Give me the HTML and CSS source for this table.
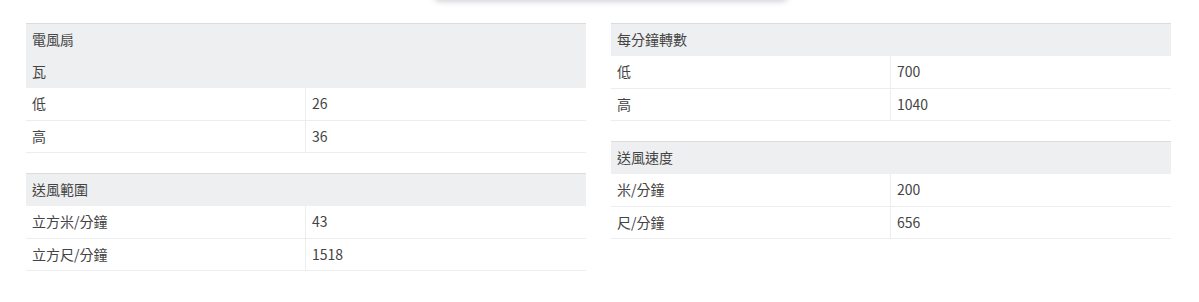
FILE: index.html
```html
<!DOCTYPE html>
<html lang="zh-Hant">
<head>
<meta charset="utf-8">
<link rel="stylesheet" href="styles.css">
</head>
<body>
<div class="popover"></div>
<div class="specs">
  <div class="col">
    <div class="spec">
      <div class="head">電風扇</div>
      <div class="head">瓦</div>
      <div class="row"><div class="k">低</div><div class="v">26</div></div>
      <div class="row"><div class="k">高</div><div class="v">36</div></div>
    </div>
    <div class="spec">
      <div class="head">送風範圍</div>
      <div class="row"><div class="k">立方米/分鐘</div><div class="v">43</div></div>
      <div class="row"><div class="k">立方尺/分鐘</div><div class="v">1518</div></div>
    </div>
  </div>
  <div class="col">
    <div class="spec">
      <div class="head">每分鐘轉數</div>
      <div class="row"><div class="k">低</div><div class="v">700</div></div>
      <div class="row"><div class="k">高</div><div class="v">1040</div></div>
    </div>
    <div class="spec">
      <div class="head">送風速度</div>
      <div class="row"><div class="k">米/分鐘</div><div class="v">200</div></div>
      <div class="row"><div class="k">尺/分鐘</div><div class="v">656</div></div>
    </div>
  </div>
</div>
</body>
</html>
```

FILE: styles.css
```css
html, body {
  margin: 0;
  padding: 0;
  background: #fff;
}
body {
  font-family: "Noto Sans CJK TC", "Open Sans", sans-serif;
  font-size: 14px;
  color: #444;
  position: relative;
  width: 1199px;
  height: 302px;
  overflow: hidden;
}
.popover {
  position: absolute;
  left: 435px;
  top: -20px;
  width: 352px;
  height: 20px;
  background: #fff;
  box-shadow: 0 1px 6px rgba(60, 60, 90, 0.28);
  border-radius: 4px;
}
.specs {
  display: flex;
  gap: 25px;
  padding: 23px 0 0 26px;
}
.col {
  width: 560px;
  display: flex;
  flex-direction: column;
  gap: 20px;
}
.spec {
  border-top: 1px solid #dcdcdc;
}
.head {
  height: 32px;
  line-height: 30px;
  background: #eeeff1;
  padding-left: 6px;
  color: #444;
}
.row {
  display: flex;
  height: 31.5px;
  line-height: 30px;
  border-bottom: 1px solid #ebedef;
}
.k {
  width: 273px;
  padding-left: 6px;
}
.v {
  flex: 1;
  border-left: 1px solid #ebedef;
  padding-left: 6px;
}
```
